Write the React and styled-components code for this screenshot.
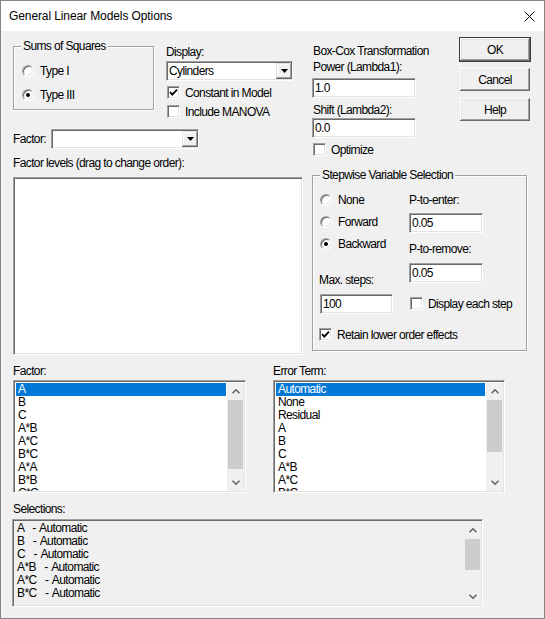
import React from 'react';
import styled, { createGlobalStyle } from 'styled-components';

const uiFont = `"Liberation Sans", Arial, sans-serif`;

const GlobalStyle = createGlobalStyle`
  html, body {
    margin: 0;
    padding: 0;
    background: #ffffff;
  }
`;

const Window = styled.div`
  box-sizing: border-box;
  width: 545px;
  height: 619px;
  border: 1px solid #858585;
  background: #f0f0f0;
  display: flex;
  flex-direction: column;
  font-family: ${uiFont};
  font-size: 12px;
  letter-spacing: -0.62px;
  color: #000;
  overflow: hidden;
`;

const TitleBar = styled.div`
  height: 30px;
  flex: none;
  background: #fff;
  display: flex;
  align-items: center;
  justify-content: space-between;
  padding: 0 9px 0 8px;
  font-size: 12px;
  letter-spacing: -0.1px;
`;

const Body = styled.div`
  flex: 1;
  display: flex;
  flex-direction: column;
  padding-left: 12px;
`;

const Row = styled.div`
  display: flex;
  align-items: flex-start;
  margin-top: ${p => p.$mt || 0}px;
`;

const Column = styled.div`
  display: flex;
  flex-direction: column;
  width: ${p => (p.$w ? `${p.$w}px` : 'auto')};
  margin-left: ${p => p.$ml || 0}px;
  margin-top: ${p => p.$mt || 0}px;
  flex: none;
`;

const Caption = styled.div`
  line-height: 14px;
  height: 14px;
  white-space: nowrap;
  margin-top: ${p => p.$mt || 0}px;
  padding-left: ${p => p.$pl || 0}px;
  width: ${p => (p.$w ? `${p.$w}px` : 'auto')};
  flex: none;
`;

const sunken = `
  box-sizing: border-box;
  border-style: solid;
  border-width: 1px;
  border-color: #a0a0a0 #ffffff #ffffff #a0a0a0;
  box-shadow: inset 1px 1px 0 #696969, inset -1px -1px 0 #e3e3e3;
`;

const Group = styled.div`
  position: relative;
  box-sizing: border-box;
  width: ${p => p.$w}px;
  height: ${p => p.$h}px;
  margin-top: ${p => p.$mt || 0}px;
  border: 1px solid #a0a0a0;
  box-shadow: inset 1px 1px 0 #fff, 1px 1px 0 #fff;
  padding: ${p => p.$pad};
  flex: none;
`;

const GroupTitle = styled.span`
  position: absolute;
  top: -8px;
  left: 7px;
  padding: 0 2px;
  line-height: 14px;
  background: #f0f0f0;
  white-space: nowrap;
`;

const OptionRow = styled.div`
  display: flex;
  align-items: center;
  height: ${p => p.$h || 19}px;
  gap: ${p => p.$gap || 5}px;
  padding-left: ${p => p.$pl || 0}px;
  margin-top: ${p => p.$mt || 0}px;
  white-space: nowrap;
`;

const RadioCircle = styled.span`
  position: relative;
  box-sizing: border-box;
  width: 12px;
  height: 12px;
  border-radius: 50%;
  background: #fff;
  border: 1px solid;
  border-color: #a0a0a0 #ffffff #ffffff #a0a0a0;
  box-shadow: inset 1px 1px 0 #696969, inset -1px -1px 0 #e3e3e3;
  flex: none;

  &::after {
    content: '';
    display: ${p => (p.$checked ? 'block' : 'none')};
    position: absolute;
    left: 3px;
    top: 3px;
    width: 4px;
    height: 4px;
    border-radius: 50%;
    background: #000;
  }
`;

const CheckBox = styled.span`
  ${sunken}
  width: 13px;
  height: 13px;
  background: #fff;
  display: flex;
  align-items: center;
  justify-content: center;
  flex: none;
`;

const FieldBox = styled.div`
  ${sunken}
  width: ${p => p.$w}px;
  height: 20px;
  background: #fff;
  margin-top: ${p => p.$mt || 0}px;
  margin-left: ${p => p.$ml || 0}px;
  padding-left: 2px;
  line-height: 16px;
  display: flex;
  align-items: center;
  justify-content: space-between;
  flex: none;
`;

const DropButton = styled.span`
  box-sizing: border-box;
  width: 16px;
  height: 16px;
  background: #f0f0f0;
  box-shadow: inset -1px -1px 0 #696969, inset 1px 1px 0 #e3e3e3, inset -2px -2px 0 #a0a0a0, inset 2px 2px 0 #fff;
  display: flex;
  align-items: center;
  justify-content: center;
`;

const PushButton = styled.div`
  box-sizing: border-box;
  width: 72px;
  height: 25px;
  background: #f0f0f0;
  border: 1px solid ${p => (p.$default ? '#3c3c3c' : 'transparent')};
  box-shadow: inset -1px -1px 0 #696969, inset 1px 1px 0 #fff, inset -2px -2px 0 #a0a0a0, inset 2px 2px 0 #e3e3e3;
  display: flex;
  align-items: center;
  justify-content: center;
`;

const ButtonStack = styled.div`
  display: flex;
  flex-direction: column;
  gap: 5px;
  margin-left: auto;
  margin-top: 6px;
`;

const ListBox = styled.div`
  ${sunken}
  width: ${p => p.$w}px;
  height: ${p => p.$h}px;
  margin-top: ${p => p.$mt || 0}px;
  margin-left: ${p => p.$ml || 0}px;
  background: ${p => p.$bg || '#fff'};
  padding: 2px 1px 1px 2px;
  display: flex;
  flex: none;
`;

const Items = styled.div`
  flex: 1;
  overflow: hidden;
  padding-right: 1px;
`;

const Item = styled.div`
  height: 13px;
  line-height: 13px;
  padding-left: 2px;
  white-space: pre;
  word-spacing: 1.5px;
  background: ${p => (p.$selected ? '#0078d7' : 'transparent')};
  color: ${p => (p.$selected ? '#fff' : '#000')};
`;

const ScrollBar = styled.div`
  width: 17px;
  background: #f0f0f0;
  display: flex;
  flex-direction: column;
  flex: none;
`;

const ScrollArrow = styled.div`
  height: 17px;
  display: flex;
  align-items: center;
  justify-content: center;
  flex: none;
`;

const Track = styled.div`
  flex: 1;
  display: flex;
  flex-direction: column;
`;

const Thumb = styled.div`
  height: ${p => p.$h}px;
  margin: 0 1px;
  background: #cdcdcd;
`;

const Chevron = ({ down }) => (
  <svg width="8" height="5" viewBox="0 0 8 5">
    <polyline
      points={down ? '0.5,0.8 4,4.2 7.5,0.8' : '0.5,4.2 4,0.8 7.5,4.2'}
      fill="none"
      stroke="#606060"
      strokeWidth="1.5"
    />
  </svg>
);

const Tick = () => (
  <svg width="9" height="9" viewBox="0 0 9 9">
    <polyline points="1,4.2 3.3,6.6 8,1.6" fill="none" stroke="#000" strokeWidth="1.8" />
  </svg>
);

const Triangle = () => (
  <svg width="7" height="4" viewBox="0 0 7 4">
    <polygon points="0,0 7,0 3.5,4" fill="#000" />
  </svg>
);

const CloseIcon = () => (
  <svg width="11" height="11" viewBox="0 0 11 11">
    <path d="M0.5 0.5 L10.5 10.5 M10.5 0.5 L0.5 10.5" stroke="#000" strokeWidth="1" />
  </svg>
);

const Radio = ({ label, checked, h, pl }) => (
  <OptionRow $h={h} $pl={pl} $gap={6}>
    <RadioCircle $checked={checked} />
    <span>{label}</span>
  </OptionRow>
);

const Check = ({ label, checked, mt, pl }) => (
  <OptionRow $mt={mt} $pl={pl}>
    <CheckBox>{checked && <Tick />}</CheckBox>
    <span>{label}</span>
  </OptionRow>
);

const Combo = ({ w, value, mt }) => (
  <FieldBox $w={w} $mt={mt}>
    <span>{value}</span>
    <DropButton>
      <Triangle />
    </DropButton>
  </FieldBox>
);

const List = ({ w, h, mt, ml, bg, items, selected, thumb }) => (
  <ListBox $w={w} $h={h} $mt={mt} $ml={ml} $bg={bg}>
    <Items>
      {items.map((it, i) => (
        <Item key={i} $selected={i === selected}>{it}</Item>
      ))}
    </Items>
    <ScrollBar>
      <ScrollArrow><Chevron /></ScrollArrow>
      <Track><Thumb $h={thumb} /></Track>
      <ScrollArrow><Chevron down /></ScrollArrow>
    </ScrollBar>
  </ListBox>
);

const factorItems = ['A', 'B', 'C', 'A*B', 'A*C', 'B*C', 'A*A', 'B*B', 'C*C'];
const errorItems = ['Automatic', 'None', 'Residual', 'A', 'B', 'C', 'A*B', 'A*C', 'B*C'];
const selectionItems = [
  'A  - Automatic',
  'B  - Automatic',
  'C  - Automatic',
  'A*B  - Automatic',
  'A*C  - Automatic',
  'B*C  - Automatic',
];

export default function App() {
  return (
    <>
      <GlobalStyle />
      <Window>
        <TitleBar>
          <span>General Linear Models Options</span>
          <CloseIcon />
        </TitleBar>
        <Body>
          <Row>
            {/* left column */}
            <Column $w={290}>
              <Row>
                <Group $w={141} $h={64} $mt={15} $pad="12px 0 0 8px">
                  <GroupTitle>Sums of Squares</GroupTitle>
                  <Radio label="Type I" h={24} />
                  <Radio label="Type III" h={24} checked />
                </Group>
                <Column $ml={12}>
                  <Caption $mt={14}>Display:</Caption>
                  <Combo w={127} value="Cylinders" mt={2} />
                  <Check label="Constant in Model" checked mt={2} pl={1} />
                  <Check label="Include MANOVA" pl={1} />
                </Column>
              </Row>
              <Row $mt={8}>
                <Caption $w={38} $mt={3}>Factor:</Caption>
                <Combo w={148} value="" />
              </Row>
              <Caption $mt={7}>Factor levels (drag to change order):</Caption>
              <ListBox $w={290} $h={178} $mt={7} />
            </Column>

            {/* right column */}
            <Column $w={219} $ml={9}>
              <Row>
                <Column $w={104}>
                  <Caption $mt={13} $pl={1}>Box-Cox Transformation</Caption>
                  <Caption $mt={2} $pl={1}>Power (Lambda1):</Caption>
                  <FieldBox $w={104} $mt={4}>1.0</FieldBox>
                  <Caption $mt={5} $pl={1}>Shift (Lambda2):</Caption>
                  <FieldBox $w={104} $mt={1}>0.0</FieldBox>
                  <Check label="Optimize" mt={2} pl={1} />
                </Column>
                <ButtonStack>
                  <PushButton $default>OK</PushButton>
                  <PushButton>Cancel</PushButton>
                  <PushButton>Help</PushButton>
                </ButtonStack>
              </Row>
              <Group $w={215} $h={176} $mt={16} $pad="13px 0 0 6px">
                <GroupTitle>Stepwise Variable Selection</GroupTitle>
                <Row>
                  <Column $w={90}>
                    <Radio label="None" h={22} pl={1} />
                    <Radio label="Forward" h={22} pl={1} />
                    <Radio label="Backward" h={22} pl={1} checked />
                    <Caption $mt={18}>Max. steps:</Caption>
                    <FieldBox $w={73} $mt={7} $ml={1}>100</FieldBox>
                  </Column>
                  <Column>
                    <Caption $mt={4}>P-to-enter:</Caption>
                    <FieldBox $w={74} $mt={6}>0.05</FieldBox>
                    <Caption $mt={9}>P-to-remove:</Caption>
                    <FieldBox $w={74} $mt={7}>0.05</FieldBox>
                    <Check label="Display each step" mt={11} pl={1} />
                  </Column>
                </Row>
                <Check label="Retain lower order effects" checked mt={11} />
              </Group>
            </Column>
          </Row>

          <Row>
            <Column>
              <Caption $mt={9}>Factor:</Caption>
              <List w={233} h={113} mt={2} items={factorItems} selected={0} thumb={69} />
            </Column>
            <Column $ml={27}>
              <Caption $mt={9}>Error Term:</Caption>
              <List w={232} h={113} mt={2} items={errorItems} selected={0} thumb={52} />
            </Column>
          </Row>

          <Caption $mt={9}>Selections:</Caption>
          <List w={471} h={88} mt={3} ml={-1} bg="#f0f0f0" items={selectionItems} thumb={31} />
        </Body>
      </Window>
    </>
  );
}
